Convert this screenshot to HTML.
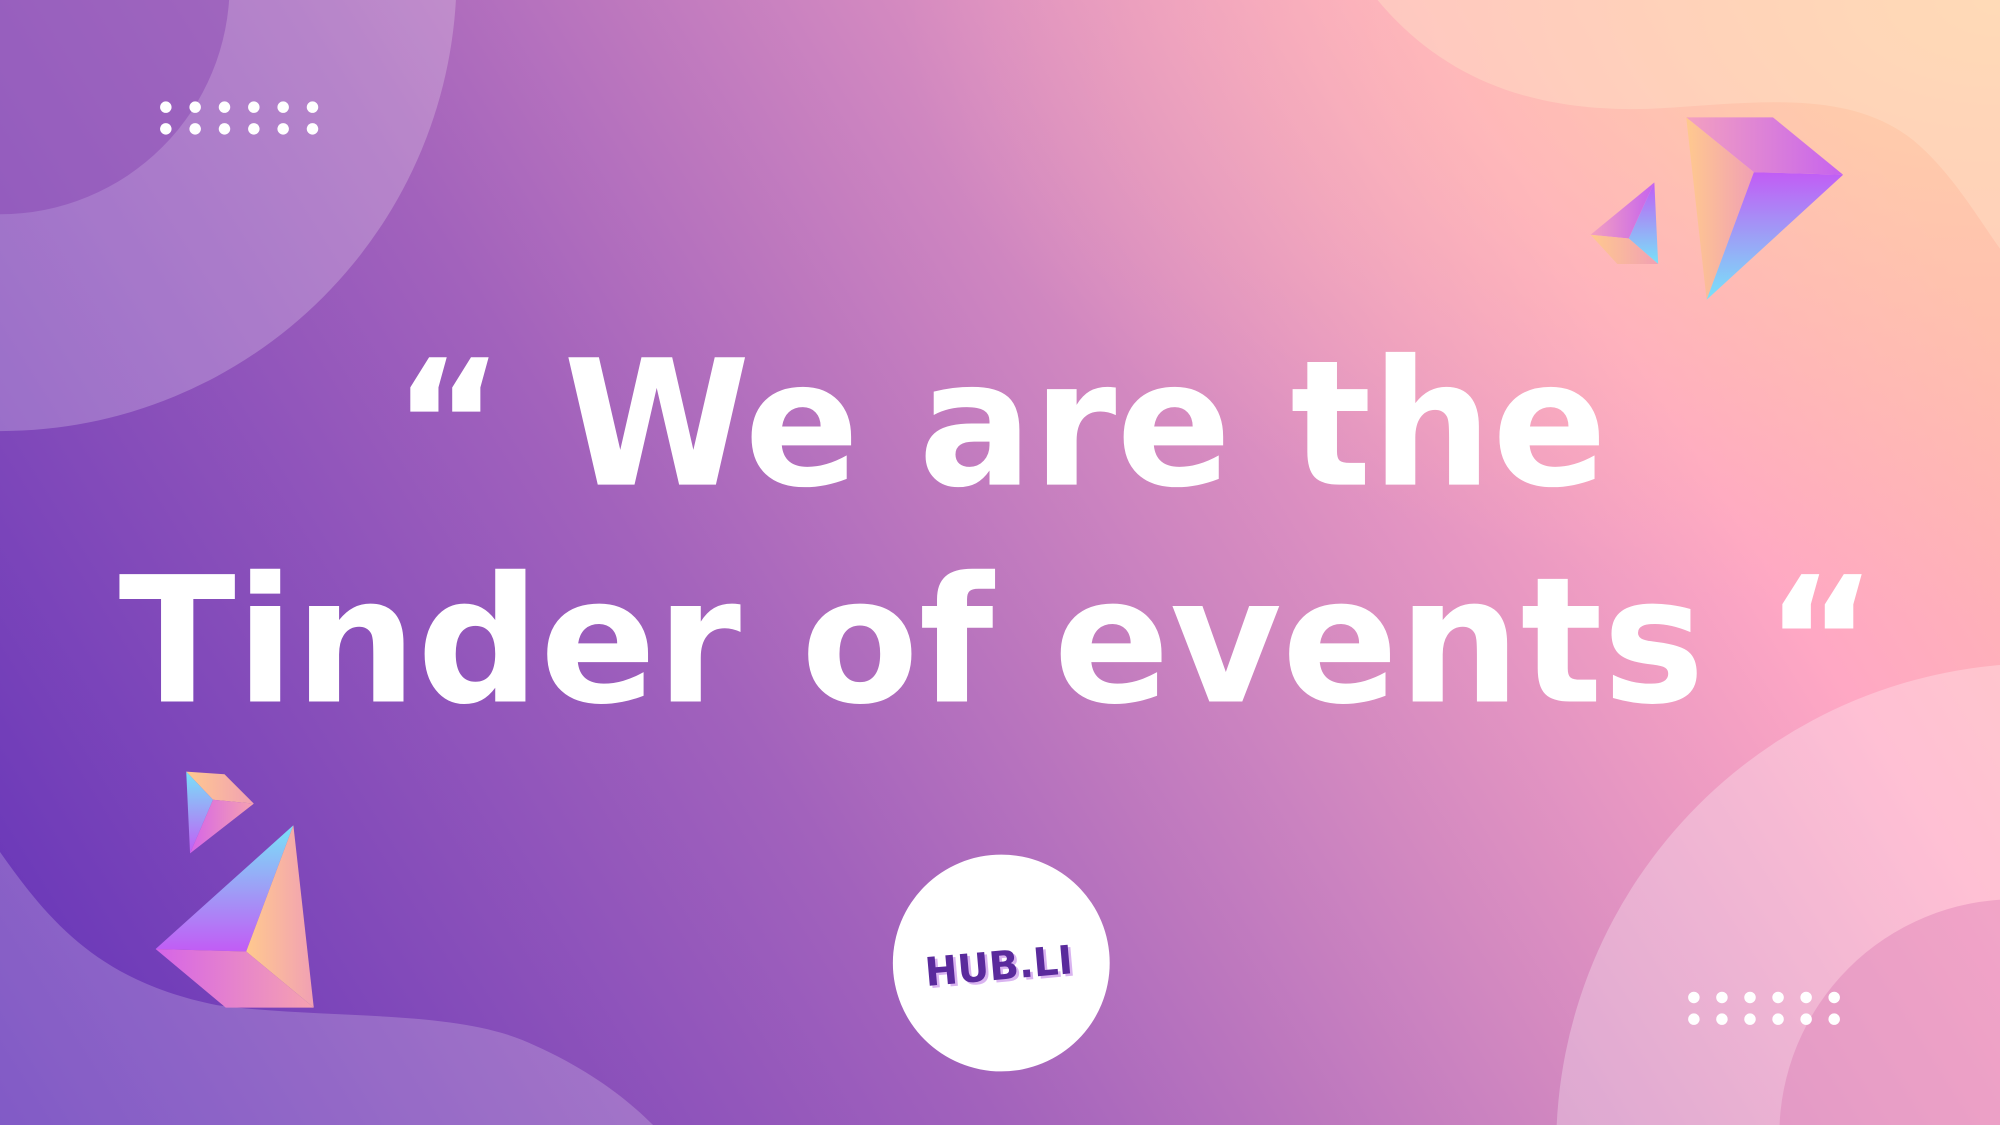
<!DOCTYPE html>
<html><head><meta charset="utf-8"><style>
html,body{margin:0;padding:0;width:2000px;height:1125px;overflow:hidden}
svg{display:block;vertical-align:top}
</style></head><body>
<svg width="2000" height="1125" viewBox="0 0 1568 882" preserveAspectRatio="none" xmlns="http://www.w3.org/2000/svg">
<defs>
<linearGradient id="bg" x1="0" y1="882" x2="1400" y2="0" gradientUnits="userSpaceOnUse">
<stop offset="0" stop-color="#6232b8"/>
<stop offset="0.4" stop-color="#a262bc"/>
<stop offset="0.62" stop-color="#cf86c0"/>
<stop offset="0.85" stop-color="#ffa8c4"/>
<stop offset="1" stop-color="#ffb8b0"/>
</linearGradient>
<radialGradient id="peach" cx="1" cy="0" r="0.55">
<stop offset="0" stop-color="#ffd9a8" stop-opacity="0.9"/>
<stop offset="1" stop-color="#ffbfb0" stop-opacity="0"/>
</radialGradient>
<linearGradient id="cA" x1="0" y1="0" x2="0" y2="1"><stop offset="0" stop-color="#c25cf5"/><stop offset="1" stop-color="#78e2f8"/></linearGradient>
<linearGradient id="cB" x1="0" y1="0" x2="1" y2="0"><stop offset="0" stop-color="#ffc98e"/><stop offset="1" stop-color="#f1a0b4"/></linearGradient>
<linearGradient id="cC" x1="0" y1="0" x2="1" y2="0"><stop offset="0" stop-color="#f3a0c0"/><stop offset="1" stop-color="#c663ee"/></linearGradient>
<linearGradient id="cD" x1="0" y1="1" x2="0" y2="0"><stop offset="0" stop-color="#c25cf5"/><stop offset="1" stop-color="#78e2f8"/></linearGradient>
<linearGradient id="cE" x1="0" y1="0" x2="1" y2="0"><stop offset="0" stop-color="#d564e8"/><stop offset="1" stop-color="#f6a2b0"/></linearGradient>
</defs>
<rect width="1568" height="882" fill="url(#bg)"/>
<rect width="1568" height="882" fill="url(#peach)"/>
<path d="M1080 0 C1130 60 1200 90 1300 85 C1380 80 1450 70 1500 110 C1530 135 1550 170 1568 195 L1568 0 Z" fill="#ffe0c8" opacity="0.45"/>
<circle cx="0" cy="-20" r="358" fill="#fff" opacity="0.22"/>
<circle cx="0" cy="-12" r="180" fill="#7a30a8" opacity="0.35"/>
<circle cx="1600" cy="900" r="380" fill="#fff" opacity="0.28"/>
<circle cx="1580" cy="890" r="185" fill="#d870b0" opacity="0.35"/>
<path d="M0 668 C40 725 80 770 170 788 C260 800 360 790 420 820 C460 838 490 860 512 882 L0 882 Z" fill="#fff" opacity="0.2"/>
<g fill="#fff">
<circle cx="130" cy="84" r="4.5"/><circle cx="153" cy="84" r="4.5"/><circle cx="176" cy="84" r="4.5"/><circle cx="199" cy="84" r="4.5"/><circle cx="222" cy="84" r="4.5"/><circle cx="245" cy="84" r="4.5"/>
<circle cx="130" cy="101" r="4.5"/><circle cx="153" cy="101" r="4.5"/><circle cx="176" cy="101" r="4.5"/><circle cx="199" cy="101" r="4.5"/><circle cx="222" cy="101" r="4.5"/><circle cx="245" cy="101" r="4.5"/>
<circle cx="1328" cy="782" r="4.5"/><circle cx="1350" cy="782" r="4.5"/><circle cx="1372" cy="782" r="4.5"/><circle cx="1394" cy="782" r="4.5"/><circle cx="1416" cy="782" r="4.5"/><circle cx="1438" cy="782" r="4.5"/>
<circle cx="1328" cy="799" r="4.5"/><circle cx="1350" cy="799" r="4.5"/><circle cx="1372" cy="799" r="4.5"/><circle cx="1394" cy="799" r="4.5"/><circle cx="1416" cy="799" r="4.5"/><circle cx="1438" cy="799" r="4.5"/>
</g>
<polygon points="1322,92 1390,92 1445,137 1375,135" fill="url(#cC)"/>
<polygon points="1322,92 1375,135 1338,235" fill="url(#cB)"/>
<polygon points="1375,135 1445,137 1338,235" fill="url(#cA)"/>
<polygon points="1297,143 1277,187 1247,184" fill="url(#cC)"/>
<polygon points="1297,143 1300,207 1277,187" fill="url(#cA)"/>
<polygon points="1247,184 1277,187 1300,207 1268,207" fill="url(#cB)"/>
<polygon points="230,647 193,746 122,744" fill="url(#cD)"/>
<polygon points="230,647 246,790 193,746" fill="url(#cB)"/>
<polygon points="122,744 193,746 246,790 177,790" fill="url(#cE)"/>
<polygon points="146,605 176,607 199,630 167,627" fill="url(#cB)"/>
<polygon points="146,605 167,627 149,669" fill="url(#cD)"/>
<polygon points="167,627 199,630 149,669" fill="url(#cE)"/>
<g fill="#fff" font-family="'DejaVu Sans','Liberation Sans',sans-serif" font-weight="bold" font-size="137">
<text x="308" y="380" textLength="952" lengthAdjust="spacingAndGlyphs">“ We are the</text>
<text x="93" y="550" textLength="1379" lengthAdjust="spacingAndGlyphs">Tinder of events “</text>
</g>
<circle cx="785" cy="755" r="85" fill="#fff"/>
<g transform="rotate(-5 783 757)" font-family="'DejaVu Sans','Liberation Sans',sans-serif" font-weight="bold" font-size="31">
<text x="785" y="770" text-anchor="middle" fill="#d9b3f0" textLength="116" lengthAdjust="spacingAndGlyphs">HUB.LI</text>
<text x="783" y="768" text-anchor="middle" fill="#5a2a9c" textLength="116" lengthAdjust="spacingAndGlyphs">HUB.LI</text>
</g>
</svg>
</body></html>
